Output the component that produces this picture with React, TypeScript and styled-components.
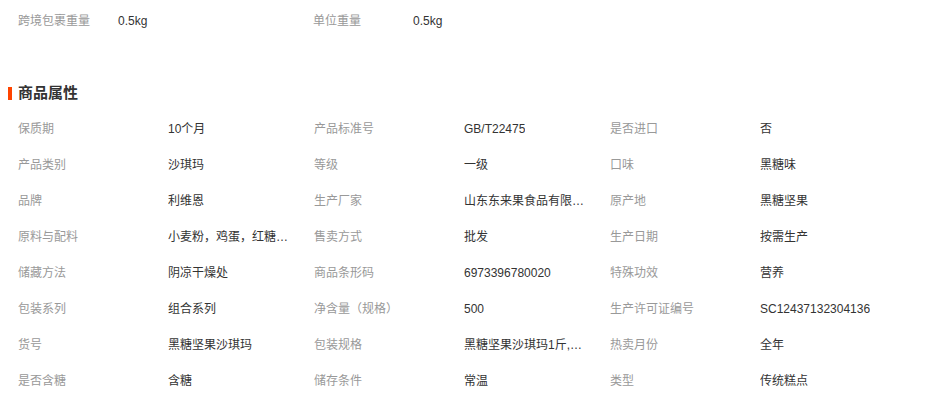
import React from "react";
import styled, { createGlobalStyle } from "styled-components";

const Global = createGlobalStyle`
  html, body { margin: 0; padding: 0; background: #fff; }
  body { font-family: "Liberation Sans", "Noto Sans CJK SC", sans-serif; font-size: 12px; line-height: 18px; color: #333; }
`;

const Page = styled.div`
  width: 927px;
  height: 396px;
  overflow: hidden;
`;

const TopRow = styled.div`
  display: flex;
  height: 42px;
  align-items: center;
  padding-left: 18px;
`;

const TopPair = styled.div`
  display: flex;
  align-items: baseline;
  width: 295px;
`;

const TopLabel = styled.span`
  width: 100px;
  color: #999;
  white-space: nowrap;
`;

const TopValue = styled.span`
  color: #333;
`;

const Heading = styled.h3`
  margin: 38px 0 5px 8px;
  height: 26px;
  display: flex;
  align-items: center;
  font-size: 15px;
  font-weight: bold;
  color: #333;
  &::before {
    content: "";
    display: block;
    width: 4px;
    height: 13px;
    background: #ff4400;
    margin-right: 6px;
  }
`;

const List = styled.div`
  display: flex;
  flex-direction: column;
  padding-left: 18px;
`;

const Row = styled.div`
  display: flex;
  height: 36px;
  align-items: center;
`;

const Pair = styled.div`
  display: flex;
  width: 296px;
  align-items: baseline;
`;

const Label = styled.span`
  width: 150px;
  flex-shrink: 0;
  color: #999;
  white-space: nowrap;
`;

const Value = styled.span`
  max-width: 123px;
  color: #333;
  white-space: nowrap;
  overflow: hidden;
  text-overflow: ellipsis;
`;

const rows: [string, string][][] = [
  [["保质期", "10个月"], ["产品标准号", "GB/T22475"], ["是否进口", "否"]],
  [["产品类别", "沙琪玛"], ["等级", "一级"], ["口味", "黑糖味"]],
  [["品牌", "利维恩"], ["生产厂家", "山东东来果食品有限公司"], ["原产地", "黑糖坚果"]],
  [["原料与配料", "小麦粉，鸡蛋，红糖，食用油"], ["售卖方式", "批发"], ["生产日期", "按需生产"]],
  [["储藏方法", "阴凉干燥处"], ["商品条形码", "6973396780020"], ["特殊功效", "营养"]],
  [["包装系列", "组合系列"], ["净含量（规格）", "500"], ["生产许可证编号", "SC12437132304136"]],
  [["货号", "黑糖坚果沙琪玛"], ["包装规格", "黑糖坚果沙琪玛1斤,散装"], ["热卖月份", "全年"]],
  [["是否含糖", "含糖"], ["储存条件", "常温"], ["类型", "传统糕点"]],
];

export default function App() {
  return (
    <Page>
      <Global />
      <TopRow>
        <TopPair>
          <TopLabel>跨境包裹重量</TopLabel>
          <TopValue>0.5kg</TopValue>
        </TopPair>
        <TopPair>
          <TopLabel>单位重量</TopLabel>
          <TopValue>0.5kg</TopValue>
        </TopPair>
      </TopRow>
      <Heading>商品属性</Heading>
      <List>
        {rows.map((r, i) => (
          <Row key={i}>
            {r.map(([l, v]) => (
              <Pair key={l}>
                <Label>{l}</Label>
                <Value>{v}</Value>
              </Pair>
            ))}
          </Row>
        ))}
      </List>
    </Page>
  );
}
